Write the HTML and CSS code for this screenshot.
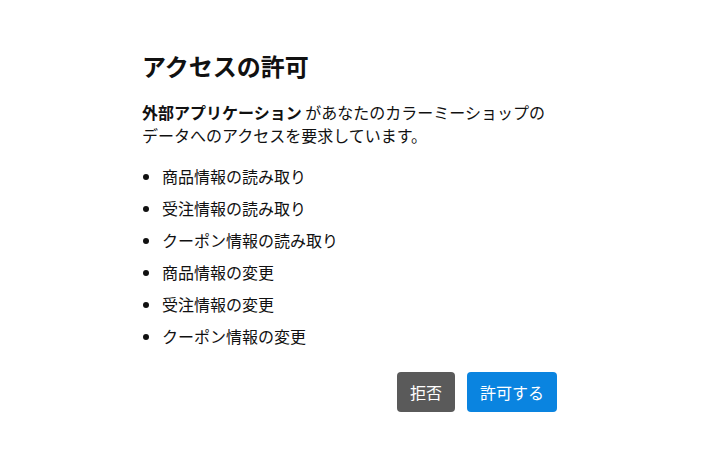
FILE: index.html
```html
<!DOCTYPE html>
<html lang="ja">
<head>
<meta charset="utf-8">
<link rel="stylesheet" href="styles.css">
</head>
<body>
<main class="dialog">
  <h1 class="title">アクセスの許可</h1>
  <p class="desc"><strong>外部アプリケーション</strong> があなたのカラーミーショップの<br>データへのアクセスを要求しています。</p>
  <ul class="scopes">
    <li>商品情報の読み取り</li>
    <li>受注情報の読み取り</li>
    <li>クーポン情報の読み取り</li>
    <li>商品情報の変更</li>
    <li>受注情報の変更</li>
    <li>クーポン情報の変更</li>
  </ul>
  <div class="actions">
    <button class="btn btn-deny">拒否</button>
    <button class="btn btn-allow">許可する</button>
  </div>
</main>
</body>
</html>
```

FILE: styles.css
```css
* { box-sizing: border-box; }
html, body { margin: 0; padding: 0; background: #fff; }
body {
  font-family: "Noto Sans CJK JP", "Noto Sans", sans-serif;
  color: #111;
}
.dialog {
  width: 415px;
  margin-left: 142px;
  padding-top: 48px;
}
.title {
  font-size: 24px;
  font-weight: 700;
  line-height: 36px;
  margin: 0 0 17px;
}
.desc {
  font-size: 16px;
  line-height: 23px;
  margin: 0 0 17px;
}
.desc strong { font-weight: 700; }
.scopes {
  margin: 0;
  padding-left: 20px;
  font-size: 16px;
  line-height: 24px;
}
.scopes li { margin-bottom: 8px; }
.actions {
  display: flex;
  justify-content: flex-end;
  gap: 12px;
  margin-top: 24px;
}
.btn {
  font-family: inherit;
  font-size: 16px;
  line-height: 24px;
  height: 40px;
  padding: 8px 13px;
  border: 0;
  border-radius: 4px;
  color: #fff;
}
.btn-deny { background: #5a5a5a; }
.btn-allow { background: #0a84e0; }
```
